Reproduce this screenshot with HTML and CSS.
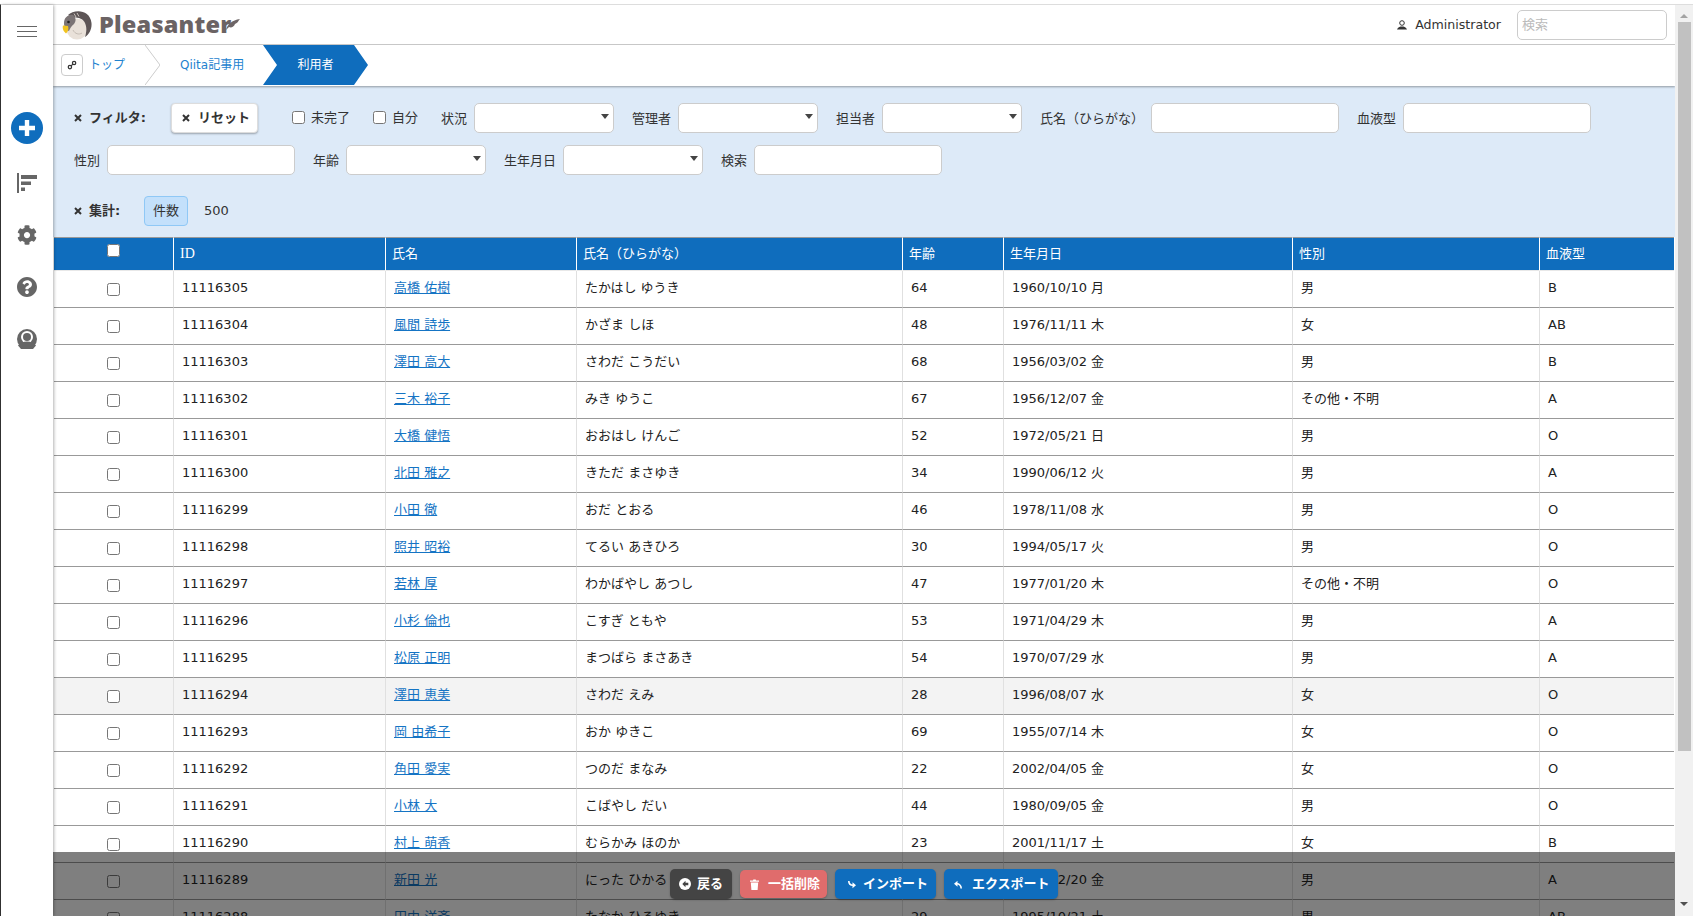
FILE: index.html
```html
<!DOCTYPE html>
<html lang="ja">
<head>
<meta charset="utf-8">
<title>利用者 - Pleasanter</title>
<link rel="stylesheet" href="styles.css">
</head>
<body>
<div class="app">
  <aside class="sidebar">
    <svg class="ic-menu" viewBox="0 0 20 12"><path d="M0 .5h20M0 5.5h20M0 10.5h20" stroke="#666" fill="none"/></svg>
    <svg class="ic-plus" viewBox="0 0 32 32"><circle cx="16" cy="16" r="16" fill="#0f6dbd"/><path d="M16 8v16M8 16h16" stroke="#fff" stroke-width="4.4"/></svg>
    <svg class="ic-side" viewBox="0 0 20 20"><path d="M0 0h2v20H0zM4 2h16v4H4zM4 8.500h10v3.500H4zM4 14.500h4V18H4z" fill="#666"/></svg>
    <svg class="ic-side" viewBox="0 0 512 512"><path fill="#666" d="M487.4 315.7l-42.600-24.600c4.300-23.200 4.300-47 0-70.200l42.600-24.600c4.900-2.800 7.100-8.600 5.500-14-11.100-35.600-30-67.800-54.700-94.600-3.800-4.100-10-5.100-14.800-2.300L380.800 110c-17.900-15.400-38.500-27.300-60.800-35.100V25.800c0-5.600-3.900-10.500-9.400-11.700-36.700-8.200-74.300-7.800-109.200 0-5.500 1.200-9.400 6.100-9.400 11.700V75c-22.200 7.900-42.800 19.800-60.800 35.100L88.700 85.500c-4.900-2.800-11-1.900-14.800 2.300-24.700 26.700-43.600 58.900-54.700 94.600-1.700 5.400.6 11.200 5.500 14L67.300 221c-4.300 23.200-4.300 47 0 70.200l-42.600 24.600c-4.900 2.800-7.100 8.600-5.500 14 11.100 35.600 30 67.800 54.700 94.600 3.800 4.100 10 5.100 14.800 2.300l42.600-24.600c17.900 15.400 38.500 27.300 60.800 35.100v49.200c0 5.600 3.900 10.500 9.400 11.700 36.700 8.200 74.300 7.800 109.200 0 5.500-1.200 9.400-6.100 9.400-11.700v-49.200c22.200-7.900 42.800-19.800 60.800-35.100l42.600 24.600c4.900 2.800 11 1.900 14.800-2.300 24.700-26.700 43.600-58.900 54.700-94.600 1.500-5.500-.7-11.300-5.600-14.100zM256 336c-44.100 0-80-35.900-80-80s35.900-80 80-80 80 35.900 80 80-35.900 80-80 80z"/></svg>
    <svg class="ic-side" viewBox="8 8 496 496"><path fill="#666" d="M504 256c0 136.997-111.043 248-248 248S8 392.997 8 256C8 119.083 119.043 8 256 8s248 111.083 248 248zM262.655 90c-54.497 0-89.255 22.957-116.549 63.758-3.536 5.286-2.353 12.415 2.715 16.258l34.699 26.310c5.205 3.947 12.621 3.008 16.665-2.122 17.864-22.658 30.113-35.797 57.303-35.797 20.429 0 45.698 13.148 45.698 32.958 0 14.976-12.363 22.667-32.534 33.976C247.128 238.528 216 254.941 216 296v4c0 6.627 5.373 12 12 12h56c6.627 0 12-5.373 12-12v-1.333c0-28.462 83.186-29.647 83.186-106.667 0-58.002-60.165-102-116.531-102zM256 338c-25.365 0-46 20.635-46 46 0 25.364 20.635 46 46 46s46-20.636 46-46c0-25.365-20.635-46-46-46z"/></svg>
    <svg class="ic-side" viewBox="0 0 20 20"><circle cx="10" cy="10" r="10" fill="#666"/><circle cx="10" cy="8" r="6" fill="#fff"/><circle cx="10" cy="8" r="4" fill="#666"/><path d="M1 16.500C3 13.500 6.500 12.500 10 12.500s7 1 9 4L16 20H4z" fill="#666"/></svg>
  </aside>

  <main class="main">
    <header class="topbar">
      <a class="logo" href="#">
        <svg class="logo-mark" viewBox="0 0 30 30">
          <ellipse cx="15" cy="19" rx="10.500" ry="10.500" fill="#e9e1d9"/>
          <path d="M6 5C12-1 28-1 29.500 13 30 19 27.500 24 23 27 26 18 24 10 17 8 13 7 9 7 6 5Z" fill="#5d5556"/>
          <path d="M2 13C2 8 6 4 11 5 14 7 14.500 11 12 14 9 16 8 19 7 21 4 20 2 17 2 13Z" fill="#7b7475"/>
          <path d="M1 15.500 6 16C7 19 6 22 4 23.500 2 22 0 19 1 15.500Z" fill="#f1c31f"/>
          <circle cx="6.500" cy="12" r="1.300" fill="#222"/>
          <path d="M12 3.500 14 7M15 3 17 6.500" stroke="#e9e1d9" stroke-width=".8" fill="none"/>
          <path d="M11 20C13 24 17 25 20 23" stroke="#b5aca4" stroke-width=".7" fill="none"/>
        </svg>
        <span class="logo-text">Pleasanter</span>
        <svg class="logo-wing" viewBox="0 0 14 12"><path d="M0 11C1 6 6 1 14 0 12 2 12 4 9 5 8 8 5 9 3 8 2 9 1 10 0 11Z" fill="#6d6566"/></svg>
      </a>
      <div class="user">
        <svg class="ic-user" viewBox="0 0 10 10"><circle cx="5" cy="3" r="2.300" fill="none" stroke="#333"/><path d="M0 9.500C1 7 3 7 3.500 6.500h3C7 7 9 7 10 9.500Z" fill="#333"/></svg>
        <span>Administrator</span>
      </div>
      <input class="search" type="text" placeholder="検索">
    </header>

    <nav class="crumbs">
      <a class="crumb-home" href="#"><svg viewBox="0 0 12 12"><path d="M5 7l2-2" stroke="#333" stroke-width="1.400"/><circle cx="3.500" cy="8.500" r="2" fill="none" stroke="#333" stroke-width="1.500"/><circle cx="8.500" cy="3.500" r="2" fill="none" stroke="#333" stroke-width="1.500"/></svg></a>
      <a class="crumb-top" href="#">トップ</a>
      <svg class="crumb-sep" viewBox="0 0 15 40"><path d="M0 0l15 20L0 40" fill="none" stroke="#ccc"/></svg>
      <a class="crumb-link" href="#">Qiita記事用</a>
      <a class="crumb-now" href="#">利用者</a>
    </nav>

    <section class="filters">
      <div class="frow">
        <div class="ftitle"><svg class="x" viewBox="0 0 8 8"><path d="M1 1l6 6M7 1L1 7" stroke="#333" stroke-width="2"/></svg><b>フィルタ:</b></div>
        <button class="reset" type="button"><svg class="x" viewBox="0 0 8 8"><path d="M1 1l6 6M7 1L1 7" stroke="#333" stroke-width="2"/></svg><b>リセット</b></button>
        <label class="check c1"><input type="checkbox"><span>未完了</span></label>
        <label class="check c2"><input type="checkbox"><span>自分</span></label>
        <div class="field f-status"><span>状況</span><div class="select"></div></div>
        <div class="field"><span>管理者</span><div class="select"></div></div>
        <div class="field"><span>担当者</span><div class="select"></div></div>
        <div class="field f-kana"><span>氏名（ひらがな）</span><input class="text" type="text"></div>
        <div class="field"><span>血液型</span><input class="text" type="text"></div>
      </div>
      <div class="frow row2">
        <div class="field"><span>性別</span><input class="text" type="text"></div>
        <div class="field"><span>年齢</span><div class="select"></div></div>
        <div class="field"><span>生年月日</span><div class="select"></div></div>
        <div class="field"><span>検索</span><input class="text" type="text"></div>
      </div>
      <div class="frow row3">
        <div class="ftitle sum"><svg class="x" viewBox="0 0 8 8"><path d="M1 1l6 6M7 1L1 7" stroke="#333" stroke-width="2"/></svg><b>集計:</b></div>
        <span class="chip">件数</span>
        <span class="total">500</span>
      </div>
    </section>

    <div class="grid-wrap">
      <table class="grid">
        <colgroup><col class="w0"><col class="w1"><col class="w2"><col class="w3"><col class="w4"><col class="w5"><col class="w6"><col class="w7"></colgroup>
        <thead>
          <tr><th class="cb"><input class="cb-head" type="checkbox"></th><th class="serif">ID</th><th>氏名</th><th>氏名（ひらがな）</th><th>年齢</th><th>生年月日</th><th>性別</th><th>血液型</th></tr>
        </thead>
        <tbody>
          <tr><td class="cb"><input type="checkbox"></td><td>11116305</td><td><a href="#">高橋 佑樹</a></td><td>たかはし ゆうき</td><td>64</td><td>1960/10/10 月</td><td>男</td><td>B</td></tr>
          <tr><td class="cb"><input type="checkbox"></td><td>11116304</td><td><a href="#">風間 詩歩</a></td><td>かざま しほ</td><td>48</td><td>1976/11/11 木</td><td>女</td><td>AB</td></tr>
          <tr><td class="cb"><input type="checkbox"></td><td>11116303</td><td><a href="#">澤田 高大</a></td><td>さわだ こうだい</td><td>68</td><td>1956/03/02 金</td><td>男</td><td>B</td></tr>
          <tr><td class="cb"><input type="checkbox"></td><td>11116302</td><td><a href="#">三木 裕子</a></td><td>みき ゆうこ</td><td>67</td><td>1956/12/07 金</td><td>その他・不明</td><td>A</td></tr>
          <tr><td class="cb"><input type="checkbox"></td><td>11116301</td><td><a href="#">大橋 健悟</a></td><td>おおはし けんご</td><td>52</td><td>1972/05/21 日</td><td>男</td><td>O</td></tr>
          <tr><td class="cb"><input type="checkbox"></td><td>11116300</td><td><a href="#">北田 雅之</a></td><td>きただ まさゆき</td><td>34</td><td>1990/06/12 火</td><td>男</td><td>A</td></tr>
          <tr><td class="cb"><input type="checkbox"></td><td>11116299</td><td><a href="#">小田 徹</a></td><td>おだ とおる</td><td>46</td><td>1978/11/08 水</td><td>男</td><td>O</td></tr>
          <tr><td class="cb"><input type="checkbox"></td><td>11116298</td><td><a href="#">照井 昭裕</a></td><td>てるい あきひろ</td><td>30</td><td>1994/05/17 火</td><td>男</td><td>O</td></tr>
          <tr><td class="cb"><input type="checkbox"></td><td>11116297</td><td><a href="#">若林 厚</a></td><td>わかばやし あつし</td><td>47</td><td>1977/01/20 木</td><td>その他・不明</td><td>O</td></tr>
          <tr><td class="cb"><input type="checkbox"></td><td>11116296</td><td><a href="#">小杉 倫也</a></td><td>こすぎ ともや</td><td>53</td><td>1971/04/29 木</td><td>男</td><td>A</td></tr>
          <tr><td class="cb"><input type="checkbox"></td><td>11116295</td><td><a href="#">松原 正明</a></td><td>まつばら まさあき</td><td>54</td><td>1970/07/29 水</td><td>男</td><td>A</td></tr>
          <tr class="hover"><td class="cb"><input type="checkbox"></td><td>11116294</td><td><a href="#">澤田 恵美</a></td><td>さわだ えみ</td><td>28</td><td>1996/08/07 水</td><td>女</td><td>O</td></tr>
          <tr><td class="cb"><input type="checkbox"></td><td>11116293</td><td><a href="#">岡 由希子</a></td><td>おか ゆきこ</td><td>69</td><td>1955/07/14 木</td><td>女</td><td>O</td></tr>
          <tr><td class="cb"><input type="checkbox"></td><td>11116292</td><td><a href="#">角田 愛実</a></td><td>つのだ まなみ</td><td>22</td><td>2002/04/05 金</td><td>女</td><td>O</td></tr>
          <tr><td class="cb"><input type="checkbox"></td><td>11116291</td><td><a href="#">小林 大</a></td><td>こばやし だい</td><td>44</td><td>1980/09/05 金</td><td>男</td><td>O</td></tr>
          <tr><td class="cb"><input type="checkbox"></td><td>11116290</td><td><a href="#">村上 萌香</a></td><td>むらかみ ほのか</td><td>23</td><td>2001/11/17 土</td><td>女</td><td>B</td></tr>
          <tr><td class="cb"><input type="checkbox"></td><td>11116289</td><td><a href="#">新田 光</a></td><td>にった ひかる</td><td>48</td><td>1976/02/20 金</td><td>男</td><td>A</td></tr>
          <tr><td class="cb"><input type="checkbox"></td><td>11116288</td><td><a href="#">田中 洋斉</a></td><td>たなか ひろゆき</td><td>29</td><td>1995/10/21 土</td><td>男</td><td>AB</td></tr>
        </tbody>
      </table>
    </div>

    <footer class="actions">
      <button class="btn back" type="button"><svg viewBox="0 0 12 12"><circle cx="6" cy="6" r="6" fill="#fff"/><path d="M6.500 2.800 3.300 6l3.200 3.200V7.300H9.300V4.700H6.500z" fill="#444"/></svg><span>戻る</span></button>
      <button class="btn danger" type="button"><svg viewBox="0 0 9 11"><path d="M0 1.500h3L3.300.5h2.400L6 1.500h3v1.200H0zM.8 3.400h7.400L7.600 11H1.400z" fill="#fff"/></svg><span>一括削除</span></button>
      <button class="btn primary" type="button"><svg viewBox="0 0 8 9"><path d="M.8 1C.8 4 3 5.200 5 5.200" fill="none" stroke="#fff" stroke-width="1.600"/><path d="M4.500 2.200 8 5.200 4.500 8.200z" fill="#fff"/></svg><span>インポート</span></button>
      <button class="btn primary export" type="button"><svg viewBox="0 0 8 9"><path d="M7.200 8.500C7.200 5.500 5 3.800 3 3.800" fill="none" stroke="#fff" stroke-width="1.600"/><path d="M3.500.8 0 3.800l3.500 3z" fill="#fff"/></svg><span>エクスポート</span></button>
    </footer>
  </main>

  <div class="scrollbar">
    <span class="arrow up"></span>
    <span class="thumb"></span>
    <span class="arrow down"></span>
  </div>
</div>
</body>
</html>
```

FILE: styles.css
```css
* { box-sizing: border-box; }
html, body { margin: 0; height: 100%; overflow: hidden; }
body {
  background: #fff;
  color: #333;
  font: 13px/1.4 "DejaVu Sans", "Noto Sans CJK JP", sans-serif;
}
a { color: #1574c4; }

.app {
  display: flex;
  height: 912px;
  border-top: 1px solid #ddd;
  border-left: 1px solid #333;
  margin-top: 4px;
}

/* sidebar */
.sidebar {
  flex: 0 0 52px;
  display: flex;
  flex-direction: column;
  align-items: center;
  gap: 32px;
  padding-top: 21px;
  box-shadow: 1px 0 3px rgba(0, 0, 0, .3);
  background: #fff;
  z-index: 3;
}
.sidebar svg { display: block; flex: none; }
.ic-menu { width: 20px; height: 12px; }
.ic-plus { width: 32px; height: 32px; margin: 42px 0 -3px; }
.ic-side { width: 20px; height: 20px; }

/* main */
.main {
  flex: 1;
  min-width: 0;
  display: flex;
  flex-direction: column;
  position: relative;
  height: 911px;
  overflow: hidden;
}
.topbar {
  flex: 0 0 40px;
  display: flex;
  align-items: center;
  border-bottom: 1px solid #ccc;
  padding: 0 8px 0 9px;
}
.logo { display: flex; align-items: center; text-decoration: none; }
.logo-mark { width: 30px; height: 30px; display: block; }
.logo-text {
  margin-left: 7px;
  color: #6b6364;
  font: 800 23.500px/1 "Open Sans", sans-serif;
  letter-spacing: .2px;
}
.logo-wing { width: 14px; height: 12px; margin: 0 0 0 -6px; }
.user {
  margin-left: auto;
  display: flex;
  align-items: center;
  gap: 8px;
  color: #333;
  font-size: 12.600px;
}
.ic-user { width: 10px; height: 10px; display: block; }
.search {
  margin-left: 16px;
  width: 150px;
  height: 30px;
  border: 1px solid #ccc;
  border-radius: 5px;
  padding: 0 4px;
  font: inherit;
  background: #fff;
}
.search::placeholder { color: #bbb; }

/* breadcrumb */
.crumbs {
  flex: 0 0 41px;
  height: 41px;
  padding: 0 0 1px 8px;
  display: flex;
  align-items: center;
  box-shadow: 0 1px 2px rgba(0, 0, 0, .35);
  background: #fff;
  z-index: 2;
}
.crumbs a { text-decoration: none; color: #1f83cf; font-size: 12px; white-space: nowrap; }
.crumb-home {
  width: 22px;
  height: 22px;
  border: 1px solid #ccc;
  border-radius: 4px;
  display: flex;
  align-items: center;
  justify-content: center;
}
.crumb-home svg { width: 10px; height: 10px; display: block; }
.crumbs .crumb-top { width: 56px; margin-left: 6px; }
.crumb-sep { width: 15px; height: 40px; display: block; flex: none; }
.crumbs .crumb-link { width: 63px; margin: 0 20px; }
.crumbs .crumb-now {
  width: 105px;
  height: 40px;
  background: #0f6dbd;
  color: #fff;
  display: flex;
  align-items: center;
  justify-content: center;
  clip-path: polygon(0 0, 91px 0, 105px 50%, 91px 100%, 0 100%, 14px 50%);
}

/* filters */
.filters {
  flex: 0 0 151px;
  background: #ddeaf8;
  padding: 17px 0 0 20px;
}
.frow { display: flex; align-items: center; height: 30px; }
.row2 { margin-top: 12px; padding-left: 1px; }
.row3 { margin-top: 21px; }
.x { width: 8px; height: 8px; display: block; flex: none; }
.ftitle { display: flex; align-items: center; gap: 7px; width: 98px; padding-left: 1px; }
.ftitle.sum { width: 71px; }
.ftitle b, .reset b { font-weight: 700; color: #333; }
.reset {
  width: 87px;
  height: 30px;
  padding: 0 0 0 10px;
  display: flex;
  align-items: center;
  gap: 8px;
  background: #fff;
  border: 1px solid #ddd;
  border-radius: 4px;
  box-shadow: 0 1px 2px rgba(0, 0, 0, .3);
  font: inherit;
}
.check { display: flex; align-items: center; gap: 6px; }
.check input { margin: 0 0 2px; width: 13px; height: 13px; }
.check span { padding-top: 1px; }
.c1 { margin-left: 34px; }
.c2 { margin-left: 23px; }
.field { display: flex; align-items: center; gap: 7px; margin-right: 18px; white-space: nowrap; }
.field > span { padding-top: 3px; }
.f-status { margin-left: 23px; }
.select, .text {
  height: 30px;
  background: #fff;
  border: 1px solid #ccc;
  border-radius: 5px;
}
.select {
  width: 140px;
  display: flex;
  align-items: center;
  justify-content: flex-end;
  padding-right: 4px;
}
.select::after {
  content: "";
  border: 4px solid transparent;
  border-top: 5px solid #444;
  border-bottom: 0;
  margin-top: -3px;
}
.text { width: 188px; padding: 0 4px; }
.chip {
  width: 44px;
  height: 30px;
  display: flex;
  align-items: center;
  justify-content: center;
  background: #c3e0fb;
  border: 1px solid #8fc8f6;
  border-radius: 4px;
}
.total { margin-left: 16px; }

/* table */
.grid-wrap { flex: 1; min-height: 0; overflow: hidden; }
.grid {
  width: 1620px;
  margin-left: 1px;
  table-layout: fixed;
  border-collapse: separate;
  border-spacing: 0;
}
.w0 { width: 120px; }
.w1 { width: 212px; }
.w2 { width: 191px; }
.w3 { width: 326px; }
.w4 { width: 101px; }
.w5 { width: 289px; }
.w6 { width: 247px; }
.w7 { width: 134px; }
.grid th {
  height: 34px;
  padding: 0 6px;
  text-align: left;
  font-weight: 400;
  color: #fff;
  background: #0f6dbd;
  border-top: 1px solid #999;
  border-right: 1px solid #fff;
  border-bottom: 1px solid #e8e8e8;
}
.grid th:last-child, .grid td:last-child { border-right: 0; }
.grid th.serif { font-family: "Liberation Serif", serif; font-size: 14px; }
.grid td {
  height: 37px;
  padding: 0 7px 1px 8px;
  border-right: 1px solid #e0e0e0;
  border-bottom: 1px solid #999;
  color: #222;
  white-space: nowrap;
  overflow: hidden;
}
.grid .cb { text-align: center; padding: 0 0 2px; }
.grid input { margin: 2px 0 0; display: inline-block; vertical-align: middle; }
.grid th.cb { padding: 0; }
.grid .cb-head { margin: 0 0 7px; }
.hover td { background: #f3f3f3; }

/* bottom action bar */
.actions {
  position: absolute;
  left: 0;
  right: 0;
  bottom: 0;
  height: 64px;
  padding-top: 17px;
  display: flex;
  justify-content: center;
  align-items: flex-start;
  gap: 8px;
  background: rgba(0, 0, 0, .5);
  z-index: 4;
}
.btn {
  height: 30px;
  border: 0;
  border-radius: 5px;
  display: flex;
  align-items: center;
  color: #fff;
  font: 700 13px/1 "DejaVu Sans", "Noto Sans CJK JP", sans-serif;
  box-shadow: 0 1px 2px rgba(0, 0, 0, .25);
}
.btn svg { display: block; flex: none; }
.btn span { margin-top: -1px; }
.back { width: 62px; background: #444; padding: 0 0 0 9px; gap: 6px; }
.back svg { width: 12px; height: 12px; }
.danger { width: 87px; height: 28px; margin-top: 1px; background: #e06c6c; padding: 0 0 0 10px; gap: 9px; }
.danger svg { width: 9px; height: 11px; }
.primary { width: 101px; background: #0f6dbd; padding: 0 0 0 13px; gap: 7px; }
.primary svg { width: 8px; height: 9px; }
.export { width: 114px; padding-left: 10px; gap: 10px; }

/* scrollbar */
.scrollbar {
  flex: 0 0 18px;
  background: #f1f1f1;
  display: flex;
  flex-direction: column;
  align-items: center;
  padding-top: 9px;
  height: 911px;
}
.arrow { display: block; border: 4px solid transparent; flex: none; }
.up { border-bottom: 4px solid #a3a3a3; border-top: 0; }
.down { border-top: 4px solid #505050; border-bottom: 0; margin-top: 151px; }
.thumb { display: block; flex: none; width: 13px; height: 729px; margin-top: 4px; background: #c1c1c1; }
```
